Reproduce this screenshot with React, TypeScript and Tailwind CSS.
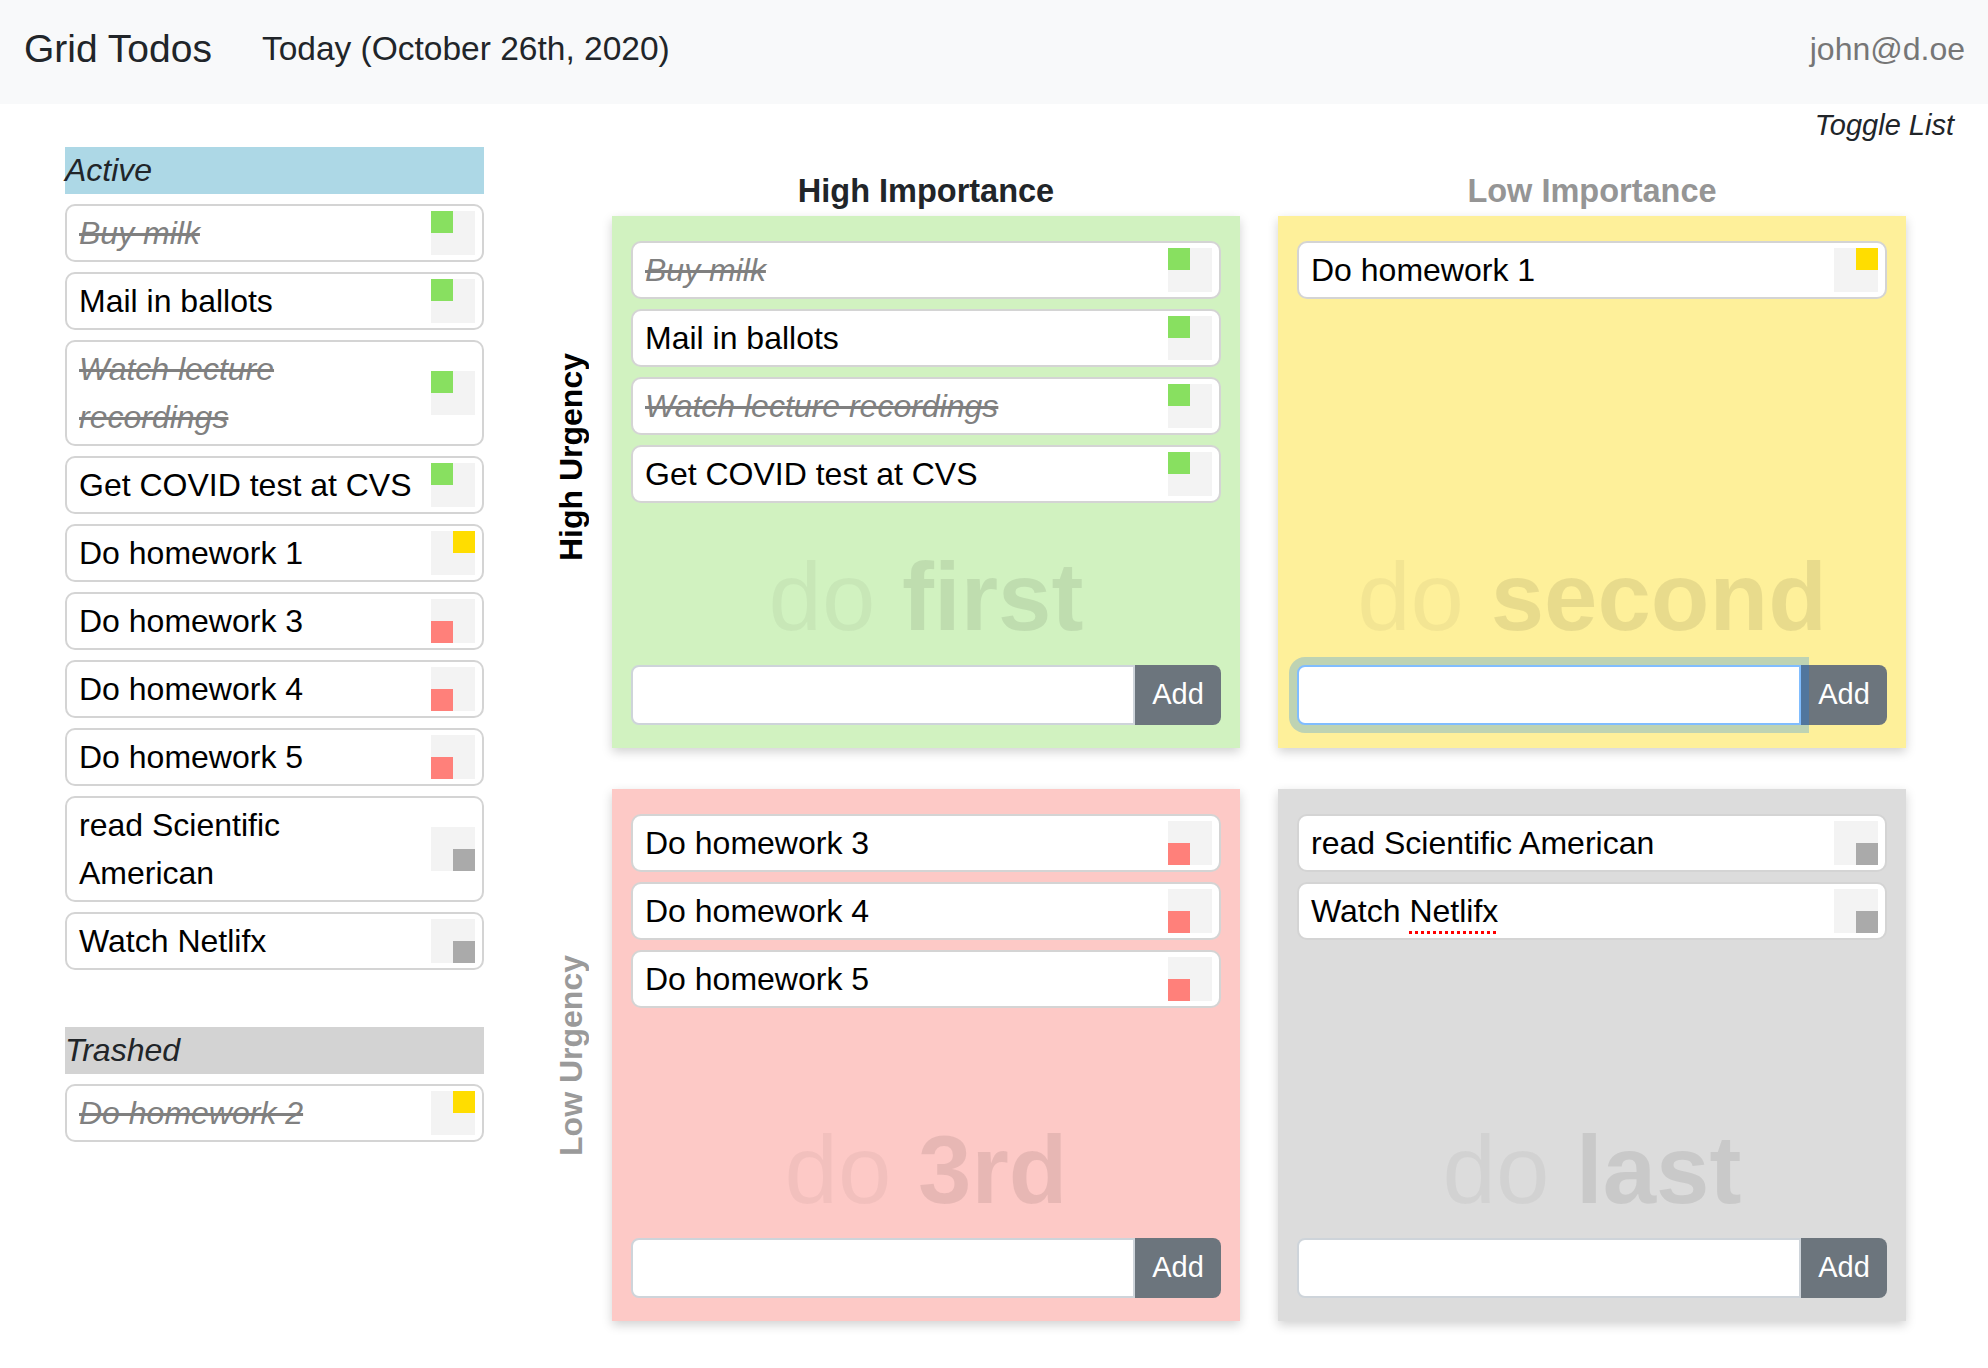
import React from "react";

type Quad = "tl" | "tr" | "bl" | "br";

type Todo = {
  text: string;
  done?: boolean;
  q: Quad;
  typo?: boolean;
};

const quadClass: Record<Quad, string> = {
  tl: "col-start-1 row-start-1 bg-[#88e060]",
  tr: "col-start-2 row-start-1 bg-[#ffdd00]",
  bl: "col-start-1 row-start-2 bg-[#ff807a]",
  br: "col-start-2 row-start-2 bg-[#aaaaaa]",
};

const active: Todo[] = [
  { text: "Buy milk", done: true, q: "tl" },
  { text: "Mail in ballots", q: "tl" },
  { text: "Watch lecture recordings", done: true, q: "tl" },
  { text: "Get COVID test at CVS", q: "tl" },
  { text: "Do homework 1", q: "tr" },
  { text: "Do homework 3", q: "bl" },
  { text: "Do homework 4", q: "bl" },
  { text: "Do homework 5", q: "bl" },
  { text: "read Scientific American", q: "br" },
  { text: "Watch Netlifx", q: "br" },
];

const trashed: Todo[] = [{ text: "Do homework 2", done: true, q: "tr" }];

function Indicator({ q }: { q: Quad }) {
  return (
    <div className="grid h-[44px] w-[44px] shrink-0 grid-cols-2 grid-rows-2 bg-[#f3f3f3]">
      <div className={quadClass[q]} />
    </div>
  );
}

function TodoItem({ todo, spell = false }: { todo: Todo; spell?: boolean }) {
  return (
    <div className="relative flex items-center rounded-[10px] border-2 border-[#d4d4d4] bg-white py-[3px] pl-[12px] pr-[7px]">
      <div
        className={
          "mr-[10px] flex-1 text-[32px] leading-[48px] " +
          (todo.done ? "italic text-[#808080] line-through" : "text-black")
        }
      >
        {spell && todo.typo ? (
          <>
            Watch{" "}
            <span className="underline decoration-[#ff0000] decoration-dotted decoration-[3px] underline-offset-[9px]">
              Netlifx
            </span>
          </>
        ) : (
          todo.text
        )}
      </div>
      <Indicator q={todo.q} />
    </div>
  );
}

type PanelProps = {
  bg: string;
  todos: Todo[];
  plain: string;
  bold: string;
  focused?: boolean;
};

function Panel({ bg, todos, plain, bold, focused = false }: PanelProps) {
  return (
    <div className={`relative flex h-[532px] w-[628px] flex-col px-[19px] pb-[23px] pt-[25px] shadow-[0_4px_10px_rgba(0,0,0,0.18)] ${bg}`}>
      <div className="pointer-events-none absolute inset-x-0 top-[333px] whitespace-nowrap text-center text-[96px] leading-none">
        <span className="text-black/[0.045]">{plain} </span>
        <span className="font-bold text-black/[0.085]">{bold}</span>
      </div>
      <div className="relative flex flex-col gap-[10px]">
        {todos.map((t) => (
          <TodoItem key={t.text} todo={{ ...t, typo: t.text === "Watch Netlifx" }} spell />
        ))}
      </div>
      <div className="relative mt-auto flex h-[60px]">
        <div
          className={
            "relative flex-1 rounded-l-[8px] border-2 bg-white " +
            (focused
              ? "z-10 border-[#80bdff] shadow-[0_0_0_8px_rgba(0,123,255,0.25)]"
              : "border-[#ced4da]")
          }
        />
        <div className="flex w-[86px] items-center justify-center rounded-r-[8px] bg-[#6c757d] text-[29px] text-white">
          Add
        </div>
      </div>
    </div>
  );
}

function SideLabel({ text, muted }: { text: string; muted?: boolean }) {
  return (
    <div className="flex w-[40px] items-center justify-center">
      <span
        className={
          "rotate-180 whitespace-nowrap text-[32px] font-bold leading-[40px] [writing-mode:vertical-rl] " +
          (muted ? "text-[#9a9a9a]" : "text-black")
        }
      >
        {text}
      </span>
    </div>
  );
}

export default function App() {
  const doFirst = active.filter((t) => t.q === "tl");
  const doSecond = active.filter((t) => t.q === "tr");
  const doThird = active.filter((t) => t.q === "bl");
  const doLast = active.filter((t) => t.q === "br");

  return (
    <div className="min-h-screen bg-white font-['Liberation_Sans',Arial,sans-serif] text-[#212529]">
      <header className="flex h-[104px] items-center bg-[#f8f9fa] pb-[6px] pl-[24px] pr-[23px]">
        <span className="text-[39px]">Grid Todos</span>
        <span className="ml-[50px] text-[33.5px]">Today (October 26th, 2020)</span>
        <span className="ml-auto text-[32px] text-[#767676]">john@d.oe</span>
      </header>

      <div className="flex h-[43px] items-center justify-end pr-[34px]">
        <span className="text-[29px] italic text-[#212529]">Toggle List</span>
      </div>

      <main className="flex pl-[65px]">
        <aside className="w-[419px]">
          <div className="h-[47px] bg-[#add8e6] text-[32px] italic leading-[47px]">Active</div>
          <div className="mt-[10px] flex flex-col gap-[10px]">
            {active.map((t) => (
              <TodoItem key={t.text} todo={t} />
            ))}
          </div>
          <div className="mt-[57px] h-[47px] bg-[#d3d3d3] text-[32px] italic leading-[47px]">Trashed</div>
          <div className="mt-[10px] flex flex-col gap-[10px]">
            {trashed.map((t) => (
              <TodoItem key={t.text} todo={t} />
            ))}
          </div>
        </aside>

        <section className="ml-[67px] flex flex-col gap-[41px] pt-[19px]">
          <div className="flex gap-[21px]">
            <SideLabel text="High Urgency" />
            <div className="flex gap-[38px]">
              <div className="flex flex-col">
                <div className="h-[50px] text-center text-[32.5px] font-bold leading-[50px] text-[#212529]">High Importance</div>
                <Panel bg="bg-[#d1f2c0]" todos={doFirst} plain="do" bold="first" />
              </div>
              <div className="flex flex-col">
                <div className="h-[50px] text-center text-[32.5px] font-bold leading-[50px] text-[#959595]">Low Importance</div>
                <Panel bg="bg-[#fef09a]" todos={doSecond} plain="do" bold="second" focused />
              </div>
            </div>
          </div>
          <div className="flex gap-[21px]">
            <SideLabel text="Low Urgency" muted />
            <div className="flex gap-[38px]">
              <Panel bg="bg-[#fdc9c6]" todos={doThird} plain="do" bold="3rd" />
              <Panel bg="bg-[#dcdcdc]" todos={doLast} plain="do" bold="last" />
            </div>
          </div>
        </section>
      </main>
    </div>
  );
}
